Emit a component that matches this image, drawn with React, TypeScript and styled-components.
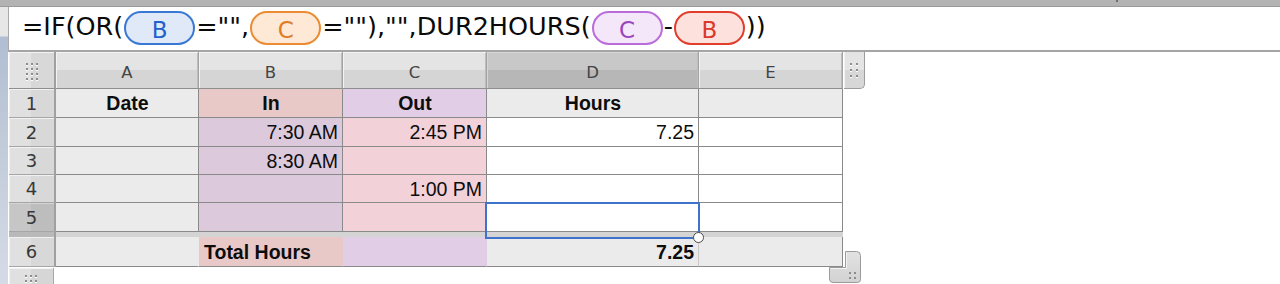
import React from 'react';
import styled, { createGlobalStyle } from 'styled-components';

const GlobalStyle = createGlobalStyle`
  html, body {
    margin: 0;
    padding: 0;
    background: #ffffff;
  }
  #root {
    width: 1280px;
    height: 284px;
    overflow: hidden;
  }
`;

type Tone = 'blue' | 'orange' | 'purple' | 'red';

const tones: Record<Tone, { border: string; bg: string; fg: string }> = {
    blue: { border: '#3a78d6', bg: '#dfe9f8', fg: '#1f63c9' },
    orange: { border: '#ec8b31', bg: '#fde9d6', fg: '#e07b22' },
    purple: { border: '#bb6cdb', bg: '#f5e7fa', fg: '#9b45bb' },
    red: { border: '#e23c2c', bg: '#fde1dd', fg: '#d93a2b' },
};

type Token = { text: string; tone?: Tone };

const formula: Array<Token> = [
    { text: '=IF(OR(' },
    { text: 'B', tone: 'blue' },
    { text: '="",' },
    { text: 'C', tone: 'orange' },
    { text: '=""),"",DUR2HOURS(' },
    { text: 'C', tone: 'purple' },
    { text: '-' },
    { text: 'B', tone: 'red' },
    { text: '))' },
];

const GRAY = '#ebebeb';
const IN_HEAD = '#e9c9c7';
const OUT_HEAD = '#e1cde6';
const IN_BODY = '#dccadc';
const OUT_BODY = '#f2d1d9';
const WHITE = '#ffffff';
const LINE = '#8a8a8a';

type Column = { key: string; w: number; selected?: boolean };

const columns: Array<Column> = [
    { key: 'A', w: 142 },
    { key: 'B', w: 143 },
    { key: 'C', w: 143 },
    { key: 'D', w: 211, selected: true },
    { key: 'E', w: 143 },
];

type CellData = {
    value?: string
    bg: string
    align?: 'left' | 'center' | 'right'
    bold?: boolean
    line?: string
};

type RowData = {
    n: number
    h: number
    selected?: boolean
    cells: Array<CellData>
};

const bodyRow = (n: number, h: number, b: string, c: string, d: string, selected?: boolean): RowData => ({
    n,
    h,
    selected,
    cells: [
        { bg: GRAY },
        { value: b, bg: IN_BODY, align: 'right' },
        { value: c, bg: OUT_BODY, align: 'right' },
        { value: d, bg: WHITE, align: 'right' },
        { bg: WHITE },
    ],
});

const rows: Array<RowData> = [
    {
        n: 1,
        h: 29,
        cells: [
            { value: 'Date', bg: GRAY, align: 'center', bold: true },
            { value: 'In', bg: IN_HEAD, align: 'center', bold: true },
            { value: 'Out', bg: OUT_HEAD, align: 'center', bold: true },
            { value: 'Hours', bg: GRAY, align: 'center', bold: true },
            { bg: GRAY },
        ],
    },
    bodyRow(2, 29, '7:30 AM', '2:45 PM', '7.25'),
    bodyRow(3, 28, '8:30 AM', '', ''),
    bodyRow(4, 28, '', '1:00 PM', ''),
    bodyRow(5, 29, '', '', '', true),
];

const footer: RowData = {
    n: 6,
    h: 30,
    cells: [
        { bg: GRAY, line: 'transparent' },
        { value: 'Total Hours', bg: IN_HEAD, align: 'left', bold: true, line: 'transparent' },
        { bg: OUT_HEAD, line: 'transparent' },
        { value: '7.25', bg: GRAY, align: 'right', bold: true, line: '#c9c9c9' },
        { bg: GRAY },
    ],
};

const Dots = (props: { cols: number; rows: number; step: number }) => {
    const w = (props.cols - 1) * props.step + 2;
    const h = (props.rows - 1) * props.step + 3;
    const items = [];
    for (let r = 0; r < props.rows; r++) {
        for (let c = 0; c < props.cols; c++) {
            items.push(
                <g key={`${r}-${c}`}>
                    <rect x={c * props.step} y={r * props.step + 1} width={2} height={2} fill="#ffffff" />
                    <rect x={c * props.step} y={r * props.step} width={2} height={2} fill="#8d8d8d" />
                </g>
            );
        }
    }
    return (
        <svg width={w} height={h} viewBox={`0 0 ${w} ${h}`}>
            {items}
        </svg>
    );
};

const Formula = () => (
    <FormulaBar>
        {formula.map((token, index) =>
            token.tone
                ? <RefPill key={index} $tone={token.tone}>{token.text}</RefPill>
                : <FormulaText key={index}>{token.text}</FormulaText>
        )}
    </FormulaBar>
);

const SheetRow = (props: { row: RowData }) => (
    <Row $h={props.row.h}>
        <RowHead $selected={props.row.selected}>{props.row.n}</RowHead>
        {props.row.cells.map((cell, index) => (
            <Cell
                key={index}
                $w={columns[index].w}
                $bg={cell.bg}
                $align={cell.align || 'left'}
                $bold={cell.bold}
                $line={cell.line || LINE}
                $h={props.row.h}
            >
                {cell.value}
            </Cell>
        ))}
    </Row>
);

const App = () => {
    return (
        <>
            <GlobalStyle />
            <Window>
                <TopBar>
                    <Tick />
                </TopBar>
                <Body>
                    <LeftStrip />
                    <Main>
                        <Formula />
                        <SheetArea>
                            <Sheet>
                                <HeaderRow>
                                    <Corner>
                                        <Dots cols={3} rows={4} step={5} />
                                    </Corner>
                                    {columns.map((col) => (
                                        <ColHead key={col.key} $w={col.w} $selected={col.selected}>
                                            {col.key}
                                        </ColHead>
                                    ))}
                                    <ColGrip>
                                        <Dots cols={2} rows={3} step={6} />
                                    </ColGrip>
                                </HeaderRow>
                                {rows.map((row) => (
                                    <SheetRow key={row.n} row={row} />
                                ))}
                                <BandRow>
                                    <BandHead />
                                    <Band />
                                </BandRow>
                                <SheetRow row={footer} />
                                <GripRow>
                                    <RowGrip>
                                        <Dots cols={3} rows={2} step={5} />
                                    </RowGrip>
                                </GripRow>

                                <Selection />
                                <Handle />
                                <CornerGrip>
                                    <svg width="33" height="33" viewBox="0 0 33 33">
                                        <defs>
                                            <linearGradient id="grip" x1="0" y1="0" x2="0" y2="1">
                                                <stop offset="0" stopColor="#e2e2e2" />
                                                <stop offset="1" stopColor="#d2d2d2" />
                                            </linearGradient>
                                        </defs>
                                        <path
                                            d="M16.5 0.5 H27.5 Q31.5 0.5 31.5 4.5 V28.5 Q31.5 31.5 28.5 31.5 H4 Q0.5 31.5 0.5 28 V16.5 H16.5 Z"
                                            fill="url(#grip)"
                                            stroke="#9b9b9b"
                                        />
                                        <path d="M17.5 1.5 V17.5 H1.5" fill="none" stroke="#f3f3f3" />
                                        <rect x="20" y="21" width="2" height="2" fill="#8d8d8d" />
                                        <rect x="25" y="21" width="2" height="2" fill="#8d8d8d" />
                                        <rect x="20" y="26" width="2" height="2" fill="#8d8d8d" />
                                        <rect x="25" y="26" width="2" height="2" fill="#8d8d8d" />
                                    </svg>
                                </CornerGrip>
                            </Sheet>
                        </SheetArea>
                    </Main>
                </Body>
            </Window>
        </>
    );
};

export default App;

const Window = styled.div`
  width: 1280px;
  height: 284px;
  display: flex;
  flex-direction: column;
  background: #ffffff;
  overflow: hidden;
`

const TopBar = styled.div`
  position: relative;
  height: 6px;
  flex-shrink: 0;
  background: #b3b3b3;
  border-bottom: 1px solid #9b9b9b;
`

const Tick = styled.div`
  position: absolute;
  left: 1116px;
  top: 0;
  width: 2px;
  height: 2px;
  background: #6f6f6f;
`

const Body = styled.div`
  display: flex;
  flex: 1;
`

const LeftStrip = styled.div`
  width: 8px;
  flex-shrink: 0;
  background: linear-gradient(
    #e7e7e7 0,
    #e7e7e7 29px,
    #b1bed3 30px,
    #bfc9d8 120px,
    #d5dbe6 100%
  );
`

const Main = styled.div`
  flex: 1;
  display: flex;
  flex-direction: column;
`

const FormulaBar = styled.div`
  height: 43px;
  box-sizing: content-box;
  border-left: 1px solid #a9a9a9;
  border-bottom: 2px solid #a5a5a5;
  padding-left: 13px;
  display: flex;
  align-items: flex-start;
  background: #ffffff;
`

const FormulaText = styled.span`
  margin-top: 4px;
  font-family: "DejaVu Sans", sans-serif;
  font-size: 25.5px;
  line-height: 30px;
  color: #0a0a0a;
  white-space: pre;
`

const RefPill = styled.span<{ $tone: Tone }>`
  margin: 4px 1px 0;
  box-sizing: border-box;
  width: 71px;
  height: 34px;
  border-radius: 17px;
  border: 2px solid ${props => tones[props.$tone].border};
  background: ${props => tones[props.$tone].bg};
  color: ${props => tones[props.$tone].fg};
  font-family: "DejaVu Sans", sans-serif;
  font-size: 23px;
  line-height: 24px;
  padding-top: 5px;
  text-align: center;
`

const SheetArea = styled.div`
  flex: 1;
  padding-left: 1px;
`

const Sheet = styled.div`
  position: relative;
  display: flex;
  flex-direction: column;
  width: 860px;
`

const HeaderRow = styled.div`
  display: flex;
  height: 37px;
`

const Corner = styled.div`
  box-sizing: border-box;
  width: 47px;
  border-right: 2px solid #a0a0a0;
  border-bottom: 1px solid #8e8e8e;
  background: linear-gradient(90deg, #e2e2e2 50%, #d8d8d8 50%);
  box-shadow: inset 1px 1px 0 #f3f3f3;
  display: flex;
  align-items: center;
  justify-content: center;
  padding-top: 3px;
`

const ColHead = styled.div<{ $w: number; $selected?: boolean }>`
  box-sizing: border-box;
  width: ${props => props.$w + 1}px;
  border-right: 1px solid #a3a3a3;
  border-bottom: 1px solid #8e8e8e;
  background: ${props => props.$selected
    ? 'linear-gradient(#c8c8c8 50%, #b7b7b7 50%)'
    : 'linear-gradient(#e4e4e4 50%, #d5d5d5 50%)'};
  box-shadow: inset 1px 1px 0 ${props => props.$selected ? '#d6d6d6' : '#f3f3f3'}, inset -1px 0 0 #bdbdbd;
  display: flex;
  align-items: center;
  justify-content: center;
  padding-top: 4px;
  font-family: "DejaVu Sans", sans-serif;
  font-size: 16.5px;
  color: #444444;
`

const ColGrip = styled.div`
  box-sizing: border-box;
  width: 21px;
  height: 37px;
  margin-left: 1px;
  border-right: 1px solid #9c9c9c;
  border-bottom: 1px solid #9c9c9c;
  border-bottom-right-radius: 5px;
  background: linear-gradient(#e4e4e4 50%, #d7d7d7 50%);
  box-shadow: inset 1px 0 0 #f3f3f3;
  display: flex;
  align-items: center;
  justify-content: center;
`

const Row = styled.div<{ $h: number }>`
  display: flex;
  height: ${props => props.$h}px;
`

const RowHead = styled.div<{ $selected?: boolean }>`
  box-sizing: border-box;
  width: 47px;
  border-right: 2px solid #a0a0a0;
  border-bottom: 1px solid #a6a6a6;
  background: ${props => props.$selected
    ? 'linear-gradient(90deg, #c6c6c6 50%, #bdbdbd 50%)'
    : 'linear-gradient(90deg, #e0e0e0 50%, #d8d8d8 50%)'};
  box-shadow: inset 1px 1px 0 ${props => props.$selected ? '#d3d3d3' : '#f1f1f1'};
  display: flex;
  align-items: center;
  justify-content: center;
  font-family: "DejaVu Sans", sans-serif;
  font-size: 18px;
  color: #383838;
`

const Cell = styled.div<{
    $w: number
    $h: number
    $bg: string
    $align: string
    $bold?: boolean
    $line: string
}>`
  box-sizing: border-box;
  width: ${props => props.$w + 1}px;
  border-right: 1px solid ${props => props.$line};
  border-bottom: 1px solid ${LINE};
  background: ${props => props.$bg};
  padding: 1px 4px 0 5px;
  font-family: "Liberation Sans", Arial, sans-serif;
  font-size: 19.5px;
  font-weight: ${props => props.$bold ? 700 : 400};
  line-height: ${props => props.$h - 2}px;
  text-align: ${props => props.$align};
  color: #0d0d0d;
  white-space: nowrap;
  overflow: hidden;
`

const BandRow = styled.div`
  display: flex;
  height: 5px;
`

const BandHead = styled.div`
  box-sizing: border-box;
  width: 47px;
  border-right: 2px solid #a0a0a0;
  background: #b9b9b9;
`

const Band = styled.div`
  width: 787px;
  background: #d4d4d4;
`

const GripRow = styled.div`
  display: flex;
  padding-top: 1px;
  height: 17px;
`

const RowGrip = styled.div`
  box-sizing: border-box;
  width: 45px;
  background: linear-gradient(90deg, #e0e0e0 50%, #d6d6d6 50%);
  box-shadow: inset 1px 1px 0 #f2f2f2;
  border-right: 1px solid #a8a8a8;
  display: flex;
  justify-content: center;
  padding-top: 7px;
`

const Selection = styled.div`
  position: absolute;
  left: 476px;
  top: 150px;
  width: 215px;
  height: 37px;
  box-sizing: border-box;
  border: 2px solid #3f72cc;
  pointer-events: none;
`

const Handle = styled.div`
  position: absolute;
  left: 684px;
  top: 180px;
  width: 11px;
  height: 11px;
  box-sizing: border-box;
  border-radius: 50%;
  border: 1.5px solid #4a4a4a;
  background: #ffffff;
`

const CornerGrip = styled.div`
  position: absolute;
  left: 820px;
  top: 199px;
  width: 33px;
  height: 33px;
`
